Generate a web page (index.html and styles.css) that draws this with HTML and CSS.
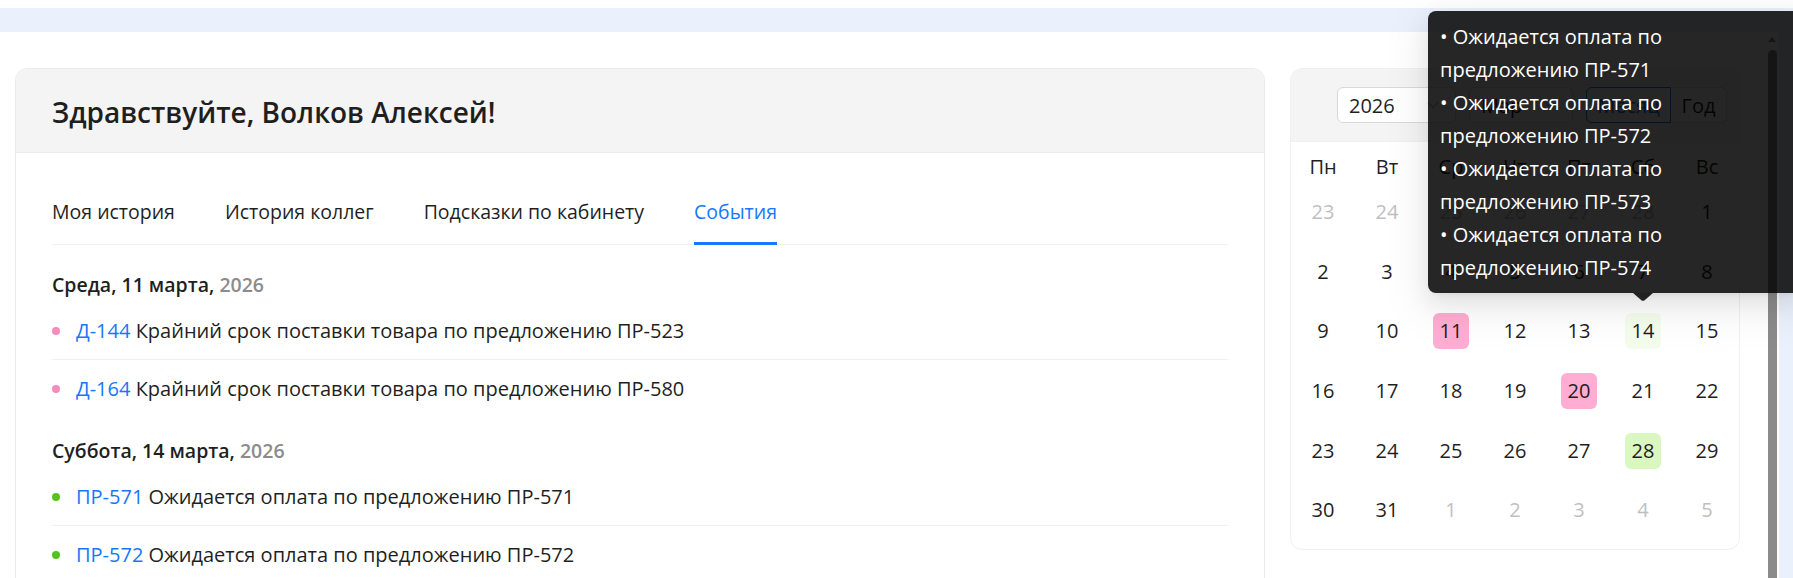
FILE: index.html
```html
<!DOCTYPE html>
<html lang="ru">
<head>
<meta charset="utf-8">
<title>Личный кабинет</title>
<link rel="stylesheet" href="styles.css">
</head>
<body>
<div class="topstrip"></div>
<div class="frame">
  <main class="content">
    <section class="card main-card">
      <header class="card-head">
        <h1 class="greeting">Здравствуйте, Волков Алексей!</h1>
      </header>
      <div class="card-body">
        <nav class="tabs">
          <a class="tab">Моя история</a>
          <a class="tab">История коллег</a>
          <a class="tab">Подсказки по кабинету</a>
          <a class="tab active">События</a>
        </nav>

        <div class="group">
          <div class="group-title">Среда, 11 марта, <span class="year">2026</span></div>
          <ul class="events">
            <li class="event"><span class="dot dot-pink"></span><span class="event-text"><a class="code">Д-144</a> Крайний срок поставки товара по предложению ПР-523</span></li>
            <li class="event"><span class="dot dot-pink"></span><span class="event-text"><a class="code">Д-164</a> Крайний срок поставки товара по предложению ПР-580</span></li>
          </ul>
        </div>

        <div class="group">
          <div class="group-title">Суббота, 14 марта, <span class="year">2026</span></div>
          <ul class="events">
            <li class="event"><span class="dot dot-green"></span><span class="event-text"><a class="code">ПР-571</a> Ожидается оплата по предложению ПР-571</span></li>
            <li class="event"><span class="dot dot-green"></span><span class="event-text"><a class="code">ПР-572</a> Ожидается оплата по предложению ПР-572</span></li>
            <li class="event"><span class="dot dot-green"></span><span class="event-text"><a class="code">ПР-573</a> Ожидается оплата по предложению ПР-573</span></li>
            <li class="event"><span class="dot dot-green"></span><span class="event-text"><a class="code">ПР-574</a> Ожидается оплата по предложению ПР-574</span></li>
          </ul>
        </div>
      </div>
    </section>

    <section class="card cal-card">
      <div class="cal-head">
        <div class="select year-select">
          <span>2026</span>
          <svg class="chev" width="12" height="8" viewBox="0 0 12 8"><path d="M1 1.5 L6 6.5 L11 1.5" fill="none" stroke="#bfbfbf" stroke-width="1.4"/></svg>
        </div>
        <div class="select month-select">
          <span>Мар</span>
          <svg class="chev" width="12" height="8" viewBox="0 0 12 8"><path d="M1 1.5 L6 6.5 L11 1.5" fill="none" stroke="#bfbfbf" stroke-width="1.4"/></svg>
        </div>
        <div class="radio-group">
          <span class="radio radio-month active">Месяц</span>
          <span class="radio radio-year">Год</span>
        </div>
      </div>
      <div class="cal-body">
        <div class="cal-grid">
          <div class="wd">Пн</div><div class="wd">Вт</div><div class="wd">Ср</div><div class="wd">Чт</div><div class="wd">Пт</div><div class="wd">Сб</div><div class="wd">Вс</div>

          <div class="day muted"><span>23</span></div><div class="day muted"><span>24</span></div><div class="day muted"><span>25</span></div><div class="day muted"><span>26</span></div><div class="day muted"><span>27</span></div><div class="day muted"><span>28</span></div><div class="day"><span>1</span></div>

          <div class="day"><span>2</span></div><div class="day"><span>3</span></div><div class="day"><span>4</span></div><div class="day"><span>5</span></div><div class="day"><span>6</span></div><div class="day"><span>7</span></div><div class="day"><span>8</span></div>

          <div class="day"><span>9</span></div><div class="day"><span>10</span></div><div class="day"><span class="mark-pink">11</span></div><div class="day"><span>12</span></div><div class="day"><span>13</span></div><div class="day"><span class="mark-green-light">14</span></div><div class="day"><span>15</span></div>

          <div class="day"><span>16</span></div><div class="day"><span>17</span></div><div class="day"><span>18</span></div><div class="day"><span>19</span></div><div class="day"><span class="mark-pink">20</span></div><div class="day"><span>21</span></div><div class="day"><span>22</span></div>

          <div class="day"><span>23</span></div><div class="day"><span>24</span></div><div class="day"><span>25</span></div><div class="day"><span>26</span></div><div class="day"><span>27</span></div><div class="day"><span class="mark-green">28</span></div><div class="day"><span>29</span></div>

          <div class="day"><span>30</span></div><div class="day"><span>31</span></div><div class="day muted"><span>1</span></div><div class="day muted"><span>2</span></div><div class="day muted"><span>3</span></div><div class="day muted"><span>4</span></div><div class="day muted"><span>5</span></div>
        </div>
      </div>
    </section>
  </main>
  <div class="scrollbar">
    <div class="sb-arrow"></div>
    <div class="sb-thumb"></div>
  </div>
</div>

<div class="tooltip" role="tooltip">
  <div class="tooltip-text">
    <div>• Ожидается оплата по предложению ПР-571</div>
    <div>• Ожидается оплата по предложению ПР-572</div>
    <div>• Ожидается оплата по предложению ПР-573</div>
    <div>• Ожидается оплата по предложению ПР-574</div>
  </div>
</div>
</body>
</html>
```

FILE: styles.css
```css
* { box-sizing: border-box; }

html, body {
  margin: 0;
  padding: 0;
}

body {
  position: relative;
  height: 100vh;
  overflow: hidden;
  background: #eaf1fd;
  font-family: "Open Sans", "Noto Sans", "DejaVu Sans", sans-serif;
  color: #1f1f1f;
}

.topstrip {
  height: 8px;
  background: #ffffff;
}

.frame {
  display: flex;
  height: calc(100vh - 32px);
  margin: 24px 14px 0 0;
  background: #ffffff;
  overflow: hidden;
}

.content {
  flex: 1;
  min-width: 0;
  display: flex;
  align-items: flex-start;
  gap: 25px;
  padding: 36px 25px 0 15px;
}

/* cards */
.card {
  background: #ffffff;
  border: 1px solid #ebebeb;
  border-radius: 12px;
  overflow: hidden;
}

.main-card {
  flex: 1;
  min-width: 0;
}

.card-head {
  background: #f4f4f4;
  border-bottom: 1px solid #ebebeb;
  padding: 25px 36px 22px;
}

.greeting {
  margin: 0;
  font-size: 28px;
  line-height: 36px;
  font-weight: 600;
  color: #1f1f1f;
}

.card-body {
  padding: 0 36px 40px;
}

/* tabs */
.tabs {
  display: flex;
  gap: 50px;
  padding-top: 44px;
  border-bottom: 1px solid #f0f0f0;
}

.tab {
  font-size: 19.5px;
  line-height: 30px;
  padding-bottom: 15px;
  border-bottom: 3px solid transparent;
  margin-bottom: -1px;
  color: #1f1f1f;
  cursor: pointer;
}

.tab.active {
  color: #1677ff;
  border-bottom-color: #1677ff;
}

/* event groups */
.group {
  margin-top: 25px;
}

.group + .group {
  margin-top: 19px;
}

.group-title {
  font-size: 19.5px;
  line-height: 30px;
  font-weight: 600;
  margin-bottom: 2px;
}

.year {
  color: #8c8c8c;
}

.events {
  list-style: none;
  margin: 0;
  padding: 0;
}

.event {
  display: flex;
  align-items: center;
  padding: 14px 0 13px;
  border-bottom: 1px solid #f0f0f0;
  font-size: 20px;
  line-height: 30px;
}

.event:last-child {
  border-bottom: none;
}

.dot {
  flex: none;
  width: 8px;
  height: 8px;
  border-radius: 50%;
  margin-right: 16px;
}

.dot-pink { background: #f78bbb; }
.dot-green { background: #52c41a; }

.code {
  color: #1677ff;
  text-decoration: none;
  cursor: pointer;
}

/* calendar */
.cal-card {
  flex: none;
  width: 450px;
  border-color: #f0f0f0;
}

.cal-head {
  display: flex;
  justify-content: flex-end;
  gap: 13px;
  padding: 18px 12px;
  background: #f4f4f4;
  border-bottom: 1px solid #f0f0f0;
}

.select {
  height: 36px;
  display: flex;
  align-items: center;
  justify-content: space-between;
  padding: 0 16px 0 11px;
  background: #ffffff;
  border: 1px solid #d9d9d9;
  border-radius: 6px;
  font-size: 20px;
}

.year-select { width: 119px; }
.month-select { width: 104px; }

.chev { flex: none; }

.radio-group {
  display: flex;
}

.radio {
  height: 36px;
  display: flex;
  align-items: center;
  justify-content: center;
  background: #ffffff;
  border: 1px solid #d9d9d9;
  font-size: 20px;
}

.radio-month {
  width: 85px;
  border-radius: 6px 0 0 6px;
}

.radio-year {
  width: 56px;
  border-radius: 0 6px 6px 0;
  border-left: none;
}

.radio.active {
  border-color: #1677ff;
  color: #1677ff;
}

.cal-body {
  padding: 8.5px 0 9px;
}

.cal-grid {
  display: grid;
  grid-template-columns: repeat(7, 1fr);
  grid-template-rows: 32px repeat(6, 59.6px);
}

.wd,
.day {
  display: flex;
  align-items: center;
  justify-content: center;
  font-size: 20px;
}

.day span {
  width: 36px;
  height: 36px;
  display: flex;
  align-items: center;
  justify-content: center;
  line-height: 1;
  border-radius: 6px;
}

.day.muted { color: #bfbfbf; }

.mark-pink { background: #ffadd2; }
.mark-green { background: #d9f7be; }
.mark-green-light { background: #f4fcec; }

/* scrollbar */
.scrollbar {
  flex: none;
  width: 14px;
  display: flex;
  flex-direction: column;
  align-items: center;
  padding-top: 5px;
}

.sb-arrow {
  width: 0;
  height: 0;
  border-left: 4px solid transparent;
  border-right: 4px solid transparent;
  border-bottom: 5px solid #8b8b8b;
}

.sb-thumb {
  flex: 1;
  width: 9px;
  margin-top: 8px;
  background: #8b8b8b;
  border-radius: 5px 5px 0 0;
}

/* tooltip */
.tooltip {
  position: absolute;
  top: 11px;
  left: 1428px;
  width: 375px;
  padding: 9px 12px;
  background: rgba(0, 0, 0, 0.85);
  color: #ffffff;
  border-radius: 8px;
  font-size: 20px;
  line-height: 33px;
  box-shadow: 0 9px 24px rgba(0, 0, 0, 0.08), 0 4px 9px -6px rgba(0, 0, 0, 0.12), 0 13px 42px 12px rgba(0, 0, 0, 0.05);
  z-index: 10;
}

.tooltip::after {
  content: "";
  position: absolute;
  top: 100%;
  left: 205px;
  width: 20px;
  height: 8px;
  background: rgba(0, 0, 0, 0.85);
  clip-path: polygon(0 0, 100% 0, 58% 90%, 50% 100%, 42% 90%);
}

.tooltip-text {
  width: 300px;
}
```
